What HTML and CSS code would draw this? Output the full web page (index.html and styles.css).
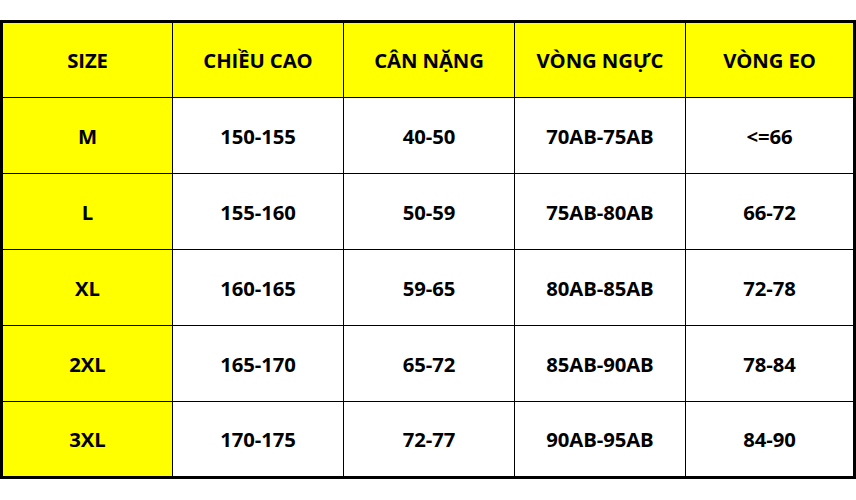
FILE: index.html
```html
<!DOCTYPE html>
<html lang="vi">
<head>
<meta charset="utf-8">
<link rel="stylesheet" href="styles.css">
</head>
<body>
<div class="sheet">
  <div class="chart">
    <div class="cell y">SIZE</div><div class="cell y">CHIỀU CAO</div><div class="cell y">CÂN NẶNG</div><div class="cell y">VÒNG NGỰC</div><div class="cell y">VÒNG EO</div>
    <div class="cell y">M</div><div class="cell">150-155</div><div class="cell">40-50</div><div class="cell">70AB-75AB</div><div class="cell">&lt;=66</div>
    <div class="cell y">L</div><div class="cell">155-160</div><div class="cell">50-59</div><div class="cell">75AB-80AB</div><div class="cell">66-72</div>
    <div class="cell y">XL</div><div class="cell">160-165</div><div class="cell">59-65</div><div class="cell">80AB-85AB</div><div class="cell">72-78</div>
    <div class="cell y">2XL</div><div class="cell">165-170</div><div class="cell">65-72</div><div class="cell">85AB-90AB</div><div class="cell">78-84</div>
    <div class="cell y">3XL</div><div class="cell">170-175</div><div class="cell">72-77</div><div class="cell">90AB-95AB</div><div class="cell">84-90</div>
  </div>
</div>
</body>
</html>
```

FILE: styles.css
```css
html, body {
  margin: 0;
  padding: 0;
  background: #ffffff;
}
.sheet {
  padding-top: 20px;
  width: 856px;
}
.chart {
  box-sizing: border-box;
  width: 856px;
  border: 3px solid #000;
  background: #000;
  display: grid;
  grid-template-columns: 169px 170px 170px 170px 1fr;
  grid-template-rows: 74px 75px 75px 75px 75px 74px;
  gap: 1px;
}
.cell {
  background: #fff;
  display: flex;
  align-items: center;
  justify-content: center;
  font-family: "Open Sans", "Noto Sans", sans-serif;
  font-weight: 700;
  font-size: 20.3px;
  color: #000;
  letter-spacing: -0.1px;
}
.cell.y {
  background: #ffff00;
}
```
